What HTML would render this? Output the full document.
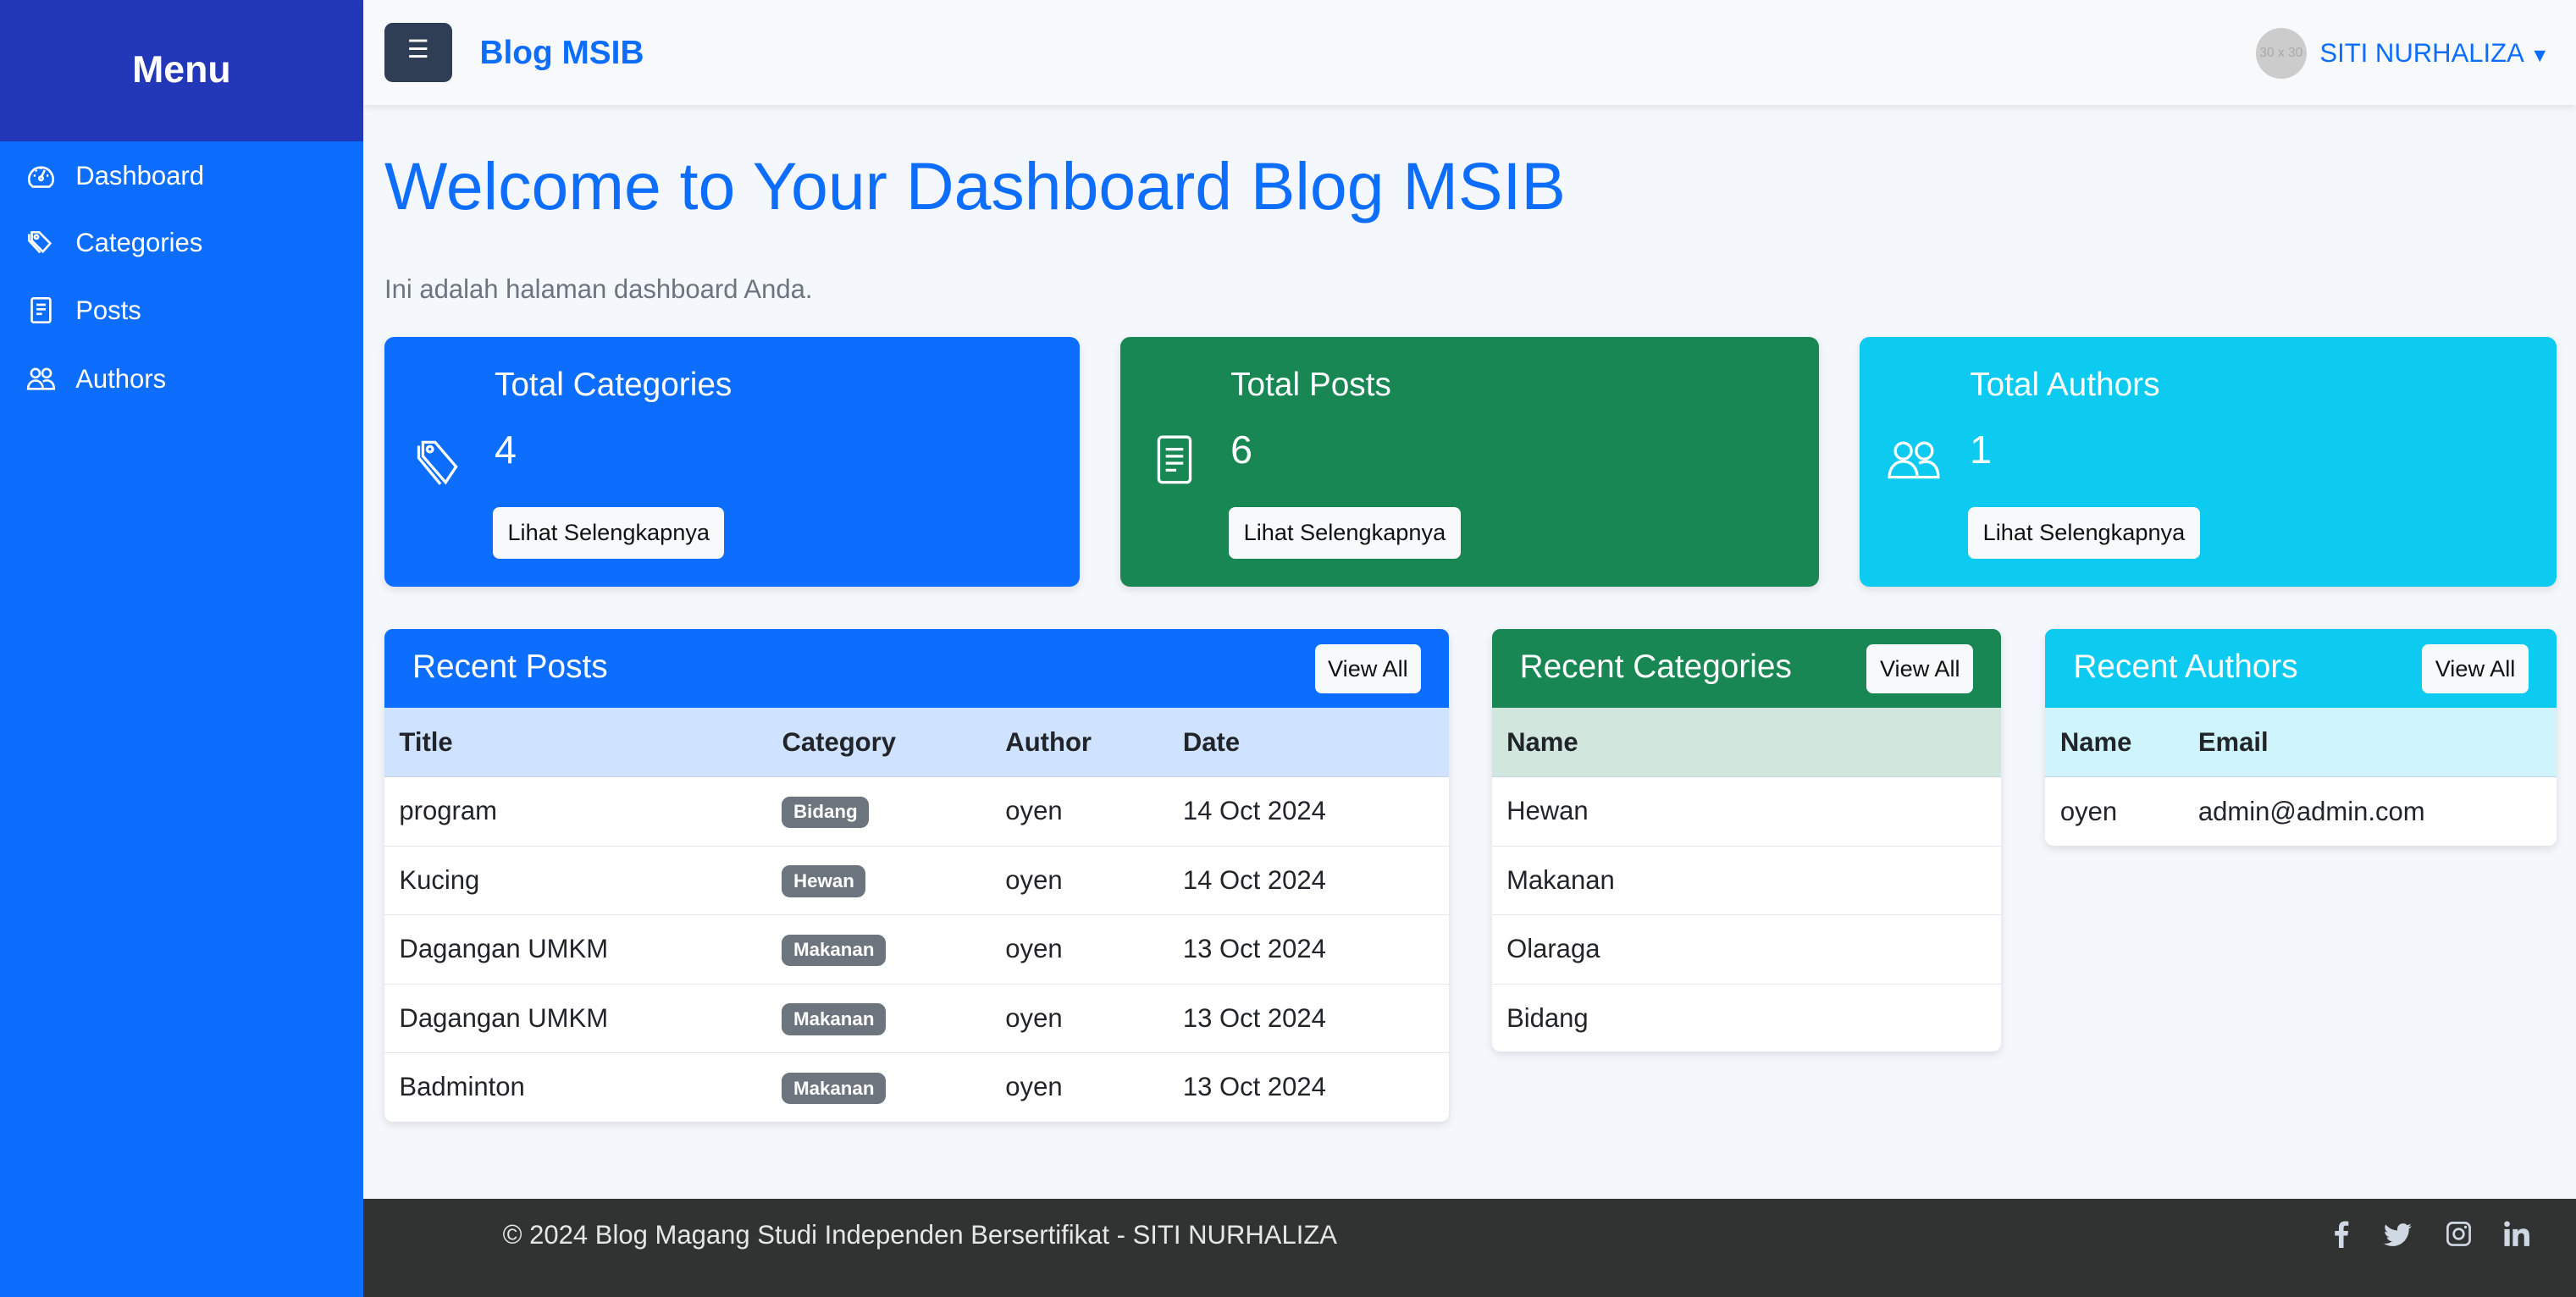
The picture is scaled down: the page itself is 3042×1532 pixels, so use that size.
<!DOCTYPE html>
<html><head><meta charset="utf-8"><style>
*{box-sizing:border-box;margin:0;padding:0}
html,body{width:3042px;height:1532px;overflow:hidden;background:#f4f7fb}
#w{zoom:1.9401;width:1568px;height:790px;position:relative;font-family:"Liberation Sans",sans-serif;color:#212529}
.abs{position:absolute}
#side{left:0;top:0;width:221px;height:790px;background:#0d6efd}
#sidehead{left:0;top:0;width:221px;height:86px;background:#2338b8;color:#fff;font-weight:bold;font-size:23px;text-align:center;line-height:86px}
.nav{position:absolute;left:16px;color:#fff;font-size:16px;display:flex;align-items:center;gap:12px;height:24px}
.nav svg{width:18px;height:18px}
#top{left:221px;top:0;width:1347px;height:64px;background:#f8f9fa;box-shadow:0 2px 4px rgba(0,0,0,.08)}
#ham{left:234px;top:14px;width:41px;height:36px;background:#2f3e55;border-radius:5px;color:#fff;text-align:center;line-height:34px;font-size:15px}
#brand{left:292px;top:21px;color:#0d6efd;font-weight:bold;font-size:20px}
#av{left:1373px;top:17px;width:31px;height:31px;border-radius:50%;background:#ccc;color:#aaa;font-size:8px;line-height:31px;text-align:center;overflow:hidden;white-space:nowrap}
#user{left:1412px;top:23px;color:#0d6efd;font-size:16px}
h1{position:absolute;left:234px;top:90px;font-size:40.6px;font-weight:normal;color:#0d6efd}
#sub{left:234px;top:167px;color:#6c757d;font-size:16px}
.card{position:absolute;top:205px;height:152px;border-radius:6px;color:#fff;box-shadow:0 2px 5px rgba(0,0,0,.1)}
.card .t{position:absolute;left:67px;top:18px;font-size:20px}
.card .n{position:absolute;left:67px;top:55px;font-size:24px}
.card .b{position:absolute;left:66px;top:104px;height:31px;padding:0 9px;background:#f8f9fa;color:#111;border-radius:4px;font-size:14px;line-height:31px}
.card svg{position:absolute;left:16px;top:58px;width:34px;height:34px}
.panel{position:absolute;top:383px;background:#fff;border-radius:5px;box-shadow:0 2px 5px rgba(0,0,0,.1);overflow:hidden}
.ph{height:48px;color:#fff;font-size:20px;line-height:46px;padding-left:17px;position:relative}
.va{position:absolute;right:17px;top:9px;height:30px;padding:0 8px;background:#f8f9fa;color:#111;border-radius:4px;font-size:14px;line-height:30px}
table{border-collapse:collapse;width:100%;font-size:16px}
th{text-align:left;font-weight:bold;height:42px;padding-left:9px;border-bottom:1px solid #c9d3e0}
td{height:42px;padding-left:9px;border-bottom:1px solid #e4e7eb}
tr:last-child td{border-bottom:none}
.bg{display:inline-block;background:#6c757d;color:#fff;font-size:11.5px;font-weight:bold;padding:3px 7px;border-radius:5px}
#foot{left:221px;top:730px;width:1347px;height:60px;background:#313332;color:#e6e6e6}
#foot .tx{position:absolute;left:85px;top:13px;font-size:16px}
#foot svg{position:absolute;top:13px;width:17px;height:17px;fill:#cfd8e3}
</style></head><body><div id="w">
<div id="side" class="abs"></div>
<div id="sidehead" class="abs">Menu</div>
<div class="nav" style="top:95px"><svg viewBox="0 0 16 16" fill="none" stroke="#fff" stroke-width="1.2"><path d="M2 12.5A6.5 6.5 0 1 1 14 12.5 L12.5 14 H3.5Z"/><path d="M8 9l2-4"/><circle cx="8" cy="9.5" r="1"/><path d="M4 8h1M11 8h1M5 5l.7.7M8 3.5v1"/></svg>Dashboard</div>
<div class="nav" style="top:136px"><svg viewBox="0 0 16 16" fill="none" stroke="#fff" stroke-width="1.2"><path d="M3 2h4l6 6-4 4.5-6-6z"/><circle cx="5.5" cy="4.5" r="1"/><path d="M1.5 3v3.5l6 6.5"/></svg>Categories</div>
<div class="nav" style="top:177px"><svg viewBox="0 0 16 16" fill="none" stroke="#fff" stroke-width="1.2"><rect x="3" y="1.5" width="10" height="13" rx="1"/><path d="M5.5 5h5M5.5 7.5h5M5.5 10h3"/></svg>Posts</div>
<div class="nav" style="top:219px"><svg viewBox="0 0 16 16" fill="none" stroke="#fff" stroke-width="1.2"><circle cx="5" cy="4.5" r="2.3"/><circle cx="11" cy="4.5" r="2.3"/><path d="M1 13c0-3 2-4.5 4-4.5s4 1.5 4 4.5zM9 9c3-1.5 6 0 6 4h-6"/></svg>Authors</div>
<div id="top" class="abs"></div>
<div id="ham" class="abs">☰</div>
<div id="brand" class="abs">Blog MSIB</div>
<div id="av" class="abs">30 x 30</div>
<div id="user" class="abs">SITI NURHALIZA <span style="font-size:12px">▼</span></div>
<h1>Welcome to Your Dashboard Blog MSIB</h1>
<div id="sub" class="abs">Ini adalah halaman dashboard Anda.</div>

<div class="card" style="left:234px;width:423px;background:#0d6efd"><svg viewBox="0 0 16 16" fill="none" stroke="#fff" stroke-width="0.8"><path d="M3.5 3h3.5l6 7-3 4.5-6.5-7.5z"/><circle cx="5.5" cy="5" r=".8"/><path d="M2.3 4v3.5L8.5 15"/></svg><div class="t">Total Categories</div><div class="n">4</div><div class="b">Lihat Selengkapnya</div></div>
<div class="card" style="left:682px;width:425px;background:#198754"><svg viewBox="0 0 16 16" fill="none" stroke="#fff" stroke-width="0.8"><rect x="3.5" y="1.5" width="9" height="13" rx="1"/><path d="M5.5 5h5M5.5 7h5M5.5 9h5M5.5 11h3"/></svg><div class="t">Total Posts</div><div class="n">6</div><div class="b">Lihat Selengkapnya</div></div>
<div class="card" style="left:1132px;width:424px;background:#0dcaf0"><svg viewBox="0 0 16 16" fill="none" stroke="#fff" stroke-width="0.8"><circle cx="5" cy="5.5" r="2.3"/><circle cx="11" cy="5.5" r="2.3"/><path d="M1 13c0-3 2-4.5 4-4.5s4 1.5 4 4.5zM9.5 9c3-1.3 5.5.3 5.5 4h-6"/></svg><div class="t">Total Authors</div><div class="n">1</div><div class="b">Lihat Selengkapnya</div></div>

<div class="panel" style="left:234px;width:648px;height:300px"><div class="ph" style="background:#0d6efd">Recent Posts<div class="va">View All</div></div>
<table><tr style="background:#cfe2ff"><th style="width:233px">Title</th><th style="width:136px">Category</th><th style="width:108px">Author</th><th>Date</th></tr>
<tr><td>program</td><td><span class="bg">Bidang</span></td><td>oyen</td><td>14 Oct 2024</td></tr>
<tr><td>Kucing</td><td><span class="bg">Hewan</span></td><td>oyen</td><td>14 Oct 2024</td></tr>
<tr><td>Dagangan UMKM</td><td><span class="bg">Makanan</span></td><td>oyen</td><td>13 Oct 2024</td></tr>
<tr><td>Dagangan UMKM</td><td><span class="bg">Makanan</span></td><td>oyen</td><td>13 Oct 2024</td></tr>
<tr><td>Badminton</td><td><span class="bg">Makanan</span></td><td>oyen</td><td>13 Oct 2024</td></tr></table></div>

<div class="panel" style="left:908px;width:310px;height:257px"><div class="ph" style="background:#198754">Recent Categories<div class="va">View All</div></div>
<table><tr style="background:#d1e7dd"><th>Name</th></tr><tr><td>Hewan</td></tr><tr><td>Makanan</td></tr><tr><td>Olaraga</td></tr><tr><td>Bidang</td></tr></table></div>

<div class="panel" style="left:1245px;width:311px;height:132px"><div class="ph" style="background:#0dcaf0">Recent Authors<div class="va">View All</div></div>
<table><tr style="background:#cff4fc"><th style="width:84px">Name</th><th>Email</th></tr><tr><td>oyen</td><td>admin@admin.com</td></tr></table></div>

<div id="foot" class="abs"><div class="tx">© 2024 Blog Magang Studi Independen Bersertifikat - SITI NURHALIZA</div>
<svg style="left:1196px" viewBox="0 0 16 16"><path d="M9 16V9h2.3l.4-2.7H9V4.6c0-.8.3-1.3 1.4-1.3h1.4V.9C11.5.8 10.7.7 9.8.7 7.800.7 6.300 1.900 6.300 4.100V6.300H4V9h2.3v7z"/></svg>
<svg style="left:1230px" viewBox="0 0 16 16"><path d="M16 3.5c-.6.3-1.2.4-1.9.5.7-.4 1.200-1 1.400-1.800-.6.4-1.300.6-2.100.8A3.300 3.300 0 0 0 7.800 6C5.100 5.900 2.700 4.600 1.100 2.600.2 4.100.7 6 2.100 7c-.5 0-1-.2-1.500-.4 0 1.600 1.100 2.900 2.600 3.200-.5.1-1 .2-1.500.1.400 1.300 1.600 2.300 3.100 2.300A6.600 6.600 0 0 1 0 13.500 9.300 9.300 0 0 0 5 15c6 0 9.400-5.100 9.400-9.500v-.4c.7-.5 1.200-1 1.600-1.600z"/></svg>
<svg style="left:1267px" viewBox="0 0 16 16"><path fill-rule="evenodd" d="M4.500 1h7A3.500 3.500 0 0 1 15 4.500v7a3.500 3.500 0 0 1-3.500 3.500h-7A3.500 3.500 0 0 1 1 11.500v-7A3.500 3.500 0 0 1 4.500 1zm0 1.300A2.200 2.200 0 0 0 2.300 4.500v7a2.200 2.200 0 0 0 2.200 2.200h7a2.200 2.200 0 0 0 2.200-2.200v-7a2.200 2.200 0 0 0-2.200-2.200zM8 4.500a3.500 3.500 0 1 1 0 7 3.500 3.500 0 0 1 0-7zm0 1.300a2.200 2.200 0 1 0 0 4.400 2.200 2.200 0 0 0 0-4.400zM11.900 3.300a.8.8 0 1 1 0 1.600.8.8 0 0 1 0-1.600z"/></svg>
<svg style="left:1302px" viewBox="0 0 16 16"><path d="M1.200 5.300h3V15h-3zM2.700.7a1.600 1.600 0 1 1 0 3.200 1.600 1.600 0 0 1 0-3.200zM6 5.300h2.800v1.300C9.300 5.700 10.400 5 12 5c3 0 3.500 2 3.500 4.500V15h-3v-4.800c0-1.200 0-2.600-1.600-2.600S9 8.800 9 10.100V15H6z"/></svg>
</div>
</div></body></html>
